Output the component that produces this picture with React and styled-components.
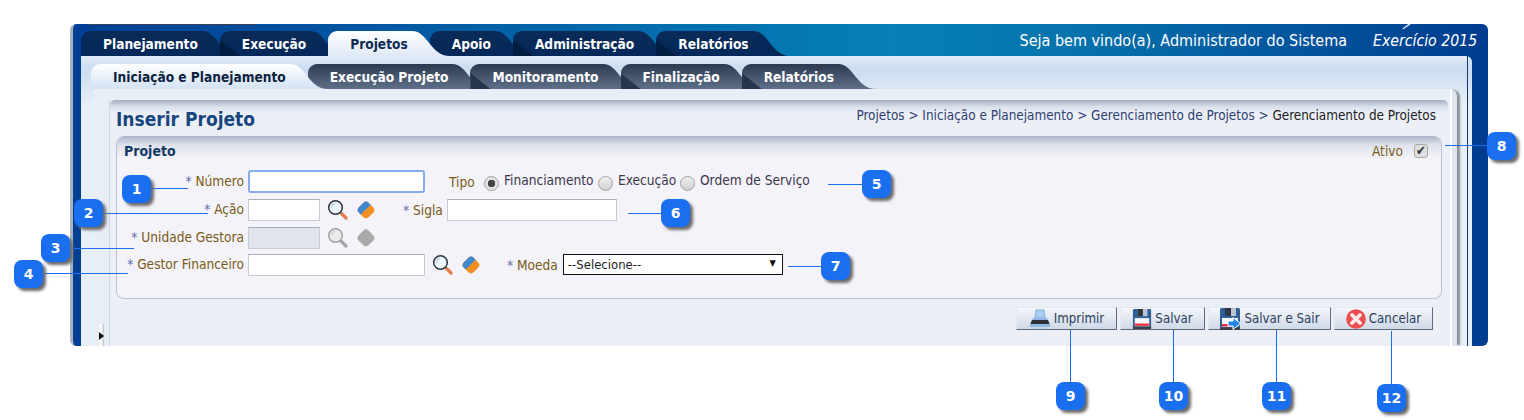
import { useId } from "react"
import styled, { createGlobalStyle } from "styled-components"

const font = `"DejaVu Sans Condensed", "DejaVu Sans", sans-serif`

const mainTabs = [
    { label: "Planejamento" },
    { label: "Execução" },
    { label: "Projetos", active: true },
    { label: "Apoio" },
    { label: "Administração" },
    { label: "Relatórios" },
]
const subTabs = [
    { label: "Iniciação e Planejamento", active: true },
    { label: "Execução Projeto" },
    { label: "Monitoramento" },
    { label: "Finalização" },
    { label: "Relatórios" },
]

const callouts = [
    { n: 1, x: 136, y: 189, line: { x: 150, y: 188, w: 38 } },
    { n: 2, x: 88, y: 213, line: { x: 103, y: 213, w: 105 } },
    { n: 3, x: 55, y: 248, line: { x: 70, y: 248, w: 64 } },
    { n: 4, x: 28, y: 274, line: { x: 43, y: 273, w: 85 } },
    { n: 5, x: 876, y: 184, line: { x: 828, y: 184, w: 34 } },
    { n: 6, x: 675, y: 213, line: { x: 628, y: 213, w: 33 } },
    { n: 7, x: 835, y: 266, line: { x: 788, y: 266, w: 33 } },
    { n: 8, x: 1501, y: 146, line: { x: 1445, y: 145, w: 42 } },
    { n: 9, x: 1070, y: 396, line: { x: 1070, y: 330, h: 52 } },
    { n: 10, x: 1173, y: 396, line: { x: 1173, y: 330, h: 52 } },
    { n: 11, x: 1276, y: 396, line: { x: 1276, y: 330, h: 52 } },
    { n: 12, x: 1391, y: 398, line: { x: 1391, y: 331, h: 53 } },
]

const tones = {
    main: ["#0a2b58", "#03285a"],
    mainActive: ["#ffffff", "#dfe9f6"],
    sub: ["#2c3a50", "#5e7089"],
    subActive: ["#ffffff", "#d3e2f3"],
}

const TabTail = ({ stops }) => {
    const id = useId()
    return (
        <TailSvg viewBox="0 0 42 25" width="42" height="25">
            <defs>
                <linearGradient id={id} x1="0" y1="0" x2="0" y2="1">
                    <stop offset="0" stopColor={stops[0]} />
                    <stop offset="1" stopColor={stops[1]} />
                </linearGradient>
            </defs>
            <path d="M0 0H4C20 0 22 25 42 25H0Z" fill={`url(#${id})`} />
        </TailSvg>
    )
}

const SearchIcon = ({ off }) => (
    <IconSvg viewBox="0 0 21 21" width="21" height="21">
        <path d="M12.5 12.5L15 15" stroke={off ? "#9a9a9a" : "#4a525c"} strokeWidth="2.4" />
        <path d="M15 15L19 19" stroke={off ? "#a5a5a5" : "#ea7b45"} strokeWidth="3.2" strokeLinecap="round" />
        <circle cx="8.5" cy="8.5" r="6.8" fill={off ? "#ececec" : "#eef7fb"} stroke={off ? "#a0a0a0" : "#2b333c"} strokeWidth="1.5" />
        <path d="M4.5 8.5C4.5 6 6 4.5 8.5 4.5" fill="none" stroke={off ? "#d0d0d0" : "#b9d6e6"} strokeWidth="1.4" />
    </IconSvg>
)

const EraserIcon = ({ off }) => (
    <IconSvg viewBox="0 0 20 20" width="20" height="20">
        <g transform="rotate(45 10 10)">
            <rect x="3" y="3" width="14" height="14" rx="4" fill={off ? "#a9a9a9" : "#f28f20"} />
            <path d="M7 3H9.5V17H7A4 4 0 0 1 3 13V7A4 4 0 0 1 7 3Z" fill={off ? "#a9a9a9" : "#3f88cc"} />
        </g>
    </IconSvg>
)

const PrinterIcon = () => (
    <IconSvg viewBox="0 0 22 20" width="22" height="20">
        <path d="M7 1H15L16 9H6Z" fill="#a9cdee" stroke="#7fb0de" />
        <path d="M1 15L4 9H18L21 15V18H1Z" fill="#8db9e4" />
        <path d="M3 11H19L20.5 15H1.5Z" fill="#2a2f38" />
        <path d="M5 18H17V20H5Z" fill="#b9d6f0" />
    </IconSvg>
)

const FloppyIcon = ({ arrow }) => (
    <IconSvg viewBox="0 0 22 22" width={arrow ? 22 : 20} height="22">
        <rect x="1" y="0" width="20" height="22" rx="1.5" fill="#2f5f96" />
        <rect x="6" y="0" width="11" height="8" fill="#b9c4d2" />
        <rect x="6" y="0" width="6" height="8" fill="#2c3644" />
        <rect x="3" y="10" width="16" height="9" fill="#f6f7fa" />
        <rect x="3" y="16" width="16" height="2.5" fill="#ea2b35" />
        <rect x="1" y="19.5" width="20" height="2.5" fill="#3b4048" />
        {arrow && <path d="M9 13H14V9.5L21.5 15.5L14 21.5V18H9Z" fill="#1f86e6" stroke="#fff" strokeWidth="1" />}
    </IconSvg>
)

const CancelIcon = () => (
    <IconSvg viewBox="0 0 20 20" width="20" height="20">
        <circle cx="10" cy="10" r="9.8" fill="#ee4d50" />
        <path d="M6 6L14 14M14 6L6 14" stroke="#fbeaea" strokeWidth="3.8" strokeLinecap="round" />
    </IconSvg>
)

const FieldLabel = ({ required = true, children }) => (
    <LabelText>
        {required && <Star>* </Star>}
        {children}
    </LabelText>
)

const TabStrip = ({ tabs, Face, dark, light }) => (
    <TabRow>
        {tabs.map((t, i) => (
            <TabItem key={t.label} $z={t.active ? 20 : i + 1}>
                <Face $active={t.active} $afterTail={i > 0 && !t.active && !tabs[i - 1].active}>
                    {t.label}
                </Face>
                <TabTail stops={t.active ? light : dark} />
            </TabItem>
        ))}
    </TabRow>
)

const App = () => {
    return (
        <Page>
            <GlobalStyle />
            <Frame>
                <TopBar>
                    <TabStrip tabs={mainTabs} Face={MainFace} dark={tones.main} light={tones.mainActive} />
                    <Welcome>Seja bem vindo(a), Administrador do Sistema</Welcome>
                    <Exercise>Exercício 2015</Exercise>
                </TopBar>

                <Body>
                    <BodyInner>
                        <SubTabBar>
                            <TabStrip tabs={subTabs} Face={SubFace} dark={tones.sub} light={tones.subActive} />
                        </SubTabBar>

                        <Workspace>
                            <Rail>
                                <Handle />
                            </Rail>
                            <Content>
                                <TitleRow>
                                    <Title>Inserir Projeto</Title>
                                    <Breadcrumb>
                                        Projetos &gt; Iniciação e Planejamento &gt; Gerenciamento de Projetos &gt; <b>Gerenciamento de Projetos</b>
                                    </Breadcrumb>
                                </TitleRow>

                                <Panel>
                                    <PanelHead>
                                        <PanelTitle>Projeto</PanelTitle>
                                        <AtivoLabel>Ativo</AtivoLabel>
                                        <CheckBox>✔</CheckBox>
                                    </PanelHead>

                                    <Form>
                                        <Row>
                                            <LabelCell><FieldLabel>Número</FieldLabel></LabelCell>
                                            <Input $w={177} $h={23} $focus />
                                            <TipoLabel>Tipo</TipoLabel>
                                            <Radio $on />
                                            <RadioText $w={94}>Financiamento</RadioText>
                                            <Radio />
                                            <RadioText $w={62}>Execução</RadioText>
                                            <Radio />
                                            <RadioText>Ordem de Serviço</RadioText>
                                        </Row>
                                        <Row>
                                            <LabelCell><FieldLabel>Ação</FieldLabel></LabelCell>
                                            <Input $w={72} $h={22} />
                                            <IconPair><SearchIcon /><EraserIcon /></IconPair>
                                            <SiglaLabel><FieldLabel>Sigla</FieldLabel></SiglaLabel>
                                            <Input $w={170} $h={22} />
                                        </Row>
                                        <Row>
                                            <LabelCell><FieldLabel>Unidade Gestora</FieldLabel></LabelCell>
                                            <Input $w={72} $h={22} $off />
                                            <IconPair><SearchIcon off /><EraserIcon off /></IconPair>
                                        </Row>
                                        <Row $tight>
                                            <LabelCell><FieldLabel>Gestor Financeiro</FieldLabel></LabelCell>
                                            <Input $w={177} $h={22} />
                                            <IconPair><SearchIcon /><EraserIcon /></IconPair>
                                            <MoedaLabel><FieldLabel>Moeda</FieldLabel></MoedaLabel>
                                            <SelectBox>
                                                --Selecione--
                                                <Caret>▼</Caret>
                                            </SelectBox>
                                        </Row>
                                    </Form>
                                </Panel>

                                <Actions>
                                    <Button $w={101}><PrinterIcon />Imprimir</Button>
                                    <Button $w={85}><FloppyIcon />Salvar</Button>
                                    <Button $w={123}><FloppyIcon arrow />Salvar e Sair</Button>
                                    <Button $w={99}><CancelIcon />Cancelar</Button>
                                </Actions>
                            </Content>
                        </Workspace>
                    </BodyInner>
                </Body>
            </Frame>

            {callouts.map(c => (
                <div key={c.n}>
                    <Leader $x={c.line.x} $y={c.line.y} $w={c.line.w} $h={c.line.h} />
                    <Badge $x={c.x} $y={c.y}>{c.n}</Badge>
                </div>
            ))}
        </Page>
    )
}

// ///// Style //////
const GlobalStyle = createGlobalStyle`
    html, body {
        margin: 0;
        padding: 0;
        background: #fff;
    }
    * {
        box-sizing: border-box;
    }
`
const Page = styled.div`
    position: relative;
    width: 1524px;
    height: 420px;
    padding: 24px 0 0 70px;
    overflow: hidden;
    background: #fff;
    font-family: ${font};
`
const Frame = styled.div`
    position: relative;
    width: 1418px;
    height: 322px;
    display: flex;
    flex-direction: column;
    padding: 0 16px 0 11px;
    border-left: 3px solid #a9b2bd;
    border-radius: 6px;
    overflow: hidden;
    background: linear-gradient(90deg, #003f96 0%, #0680b6 58%, #0674ad 70%, #003c8f 100%);

    &::before {
        content: "";
        position: absolute;
        left: 15px;
        top: 0;
        width: 168px;
        height: 1px;
        background: #3a4450;
    }
    &::after {
        content: "";
        position: absolute;
        left: 1329px;
        top: 0;
        width: 9px;
        height: 5px;
        clip-path: polygon(100% 0, 70% 0, 0 100%, 20% 100%);
        background: #dfe9f6;
    }
`
// Top bar
const TopBar = styled.div`
    flex: none;
    height: 32px;
    display: flex;
    align-items: flex-end;
    margin-left: -3px;
`
const TabRow = styled.div`
    flex: 1;
    display: flex;
    height: 25px;
`
const TabItem = styled.div`
    position: relative;
    z-index: ${p => p.$z};
    display: flex;
    height: 25px;
`
const TailSvg = styled.svg`
    flex: none;
    display: block;
    margin-right: -20px;
`
const MainFace = styled.div`
    position: relative;
    display: flex;
    align-items: center;
    height: 25px;
    padding-left: 22px;
    border-radius: 9px 0 0 0;
    font-size: 13.6px;
    font-weight: 700;
    color: ${p => (p.$active ? "#0d2a52" : "#fff")};
    background: linear-gradient(${p => (p.$active ? "#ffffff, #dfe9f6" : "#0a2b58, #03285a")});

    &::before {
        content: "";
        display: ${p => (p.$afterTail ? "block" : "none")};
        position: absolute;
        left: 0;
        bottom: 0;
        width: 20px;
        height: 16px;
        clip-path: polygon(0 0, 100% 100%, 0 100%);
        background: #021d42;
    }
`
const SubFace = styled(MainFace)`
    color: ${p => (p.$active ? "#0c1f3e" : "#fff")};
    background: linear-gradient(${p => (p.$active ? "#ffffff, #d3e2f3" : "#2c3a50, #5e7089")});

    &::before {
        background: #26354b;
    }
`
const Welcome = styled.div`
    height: 32px;
    line-height: 34px;
    font-size: 16px;
    color: #fff;
    white-space: nowrap;
`
const Exercise = styled.div`
    height: 32px;
    line-height: 34px;
    margin: 0 -6px 0 26px;
    width: 105px;
    font-size: 15.7px;
    font-style: italic;
    color: #fff;
    white-space: nowrap;
`
// Body
const Body = styled.div`
    flex: 1;
    min-height: 0;
    margin-left: -3px;
    padding-right: 4px;
    border-radius: 0 6px 0 0;
    background: linear-gradient(#e2ebf7 0, #cbddf2 12px, #dbe7f4 34px, #e8eff7 50px);
`
const BodyInner = styled.div`
    height: 100%;
    display: flex;
    flex-direction: column;
    padding: 8px 10px 0 10px;
    border-right: 1px solid #123a75;
`
const SubTabBar = styled.div`
    flex: none;
    height: 25px;
`
const Workspace = styled.div`
    flex: 1;
    min-height: 0;
    display: flex;
    margin-left: 2px;
    padding-top: 11px;
    border-radius: 0 8px 0 0;
    box-shadow: 4px 0 2px -1px #8a8e94;
    background: linear-gradient(90deg, #e8eef5 calc(100% - 7px), #fff calc(100% - 7px), #fff calc(100% - 5px), #dde5ef calc(100% - 5px));
`
const Rail = styled.div`
    position: relative;
    flex: none;
    width: 17px;
    border-right: 1px solid #cfd8e2;
`
const Handle = styled.div`
    position: absolute;
    left: 4px;
    bottom: 0;
    width: 7px;
    height: 22px;
    background: linear-gradient(90deg, #dfe8f3, #fff 60%, #b9c3ce);

    &::after {
        content: "";
        position: absolute;
        left: 2px;
        top: 8px;
        border-left: 5px solid #111;
        border-top: 4px solid transparent;
        border-bottom: 4px solid transparent;
    }
`
const Content = styled.div`
    flex: 1;
    min-width: 0;
    margin-right: 9px;
    padding: 0 6px;
    border-radius: 5px 5px 0 0;
    background: #ecf0f6 linear-gradient(#a3aec4 0, #dbe2ec 7px, #ecf0f6 14px) no-repeat;
`
const TitleRow = styled.div`
    height: 36px;
    display: flex;
    align-items: flex-end;
    justify-content: space-between;
    padding: 0 6px 5px 0;
`
const Title = styled.div`
    font-size: 19px;
    font-weight: 700;
    line-height: 24px;
    color: #17467f;
`
const Breadcrumb = styled.div`
    font-size: 13.4px;
    line-height: 20px;
    padding-bottom: 5px;
    color: #2c3d73;

    b {
        font-weight: 400;
        color: #1b1b24;
    }
`
// Panel
const Panel = styled.div`
    height: 163px;
    border: 1px solid #b9c3d6;
    border-top: 0;
    border-radius: 8px;
    background: #f3f3f9;
`
const PanelHead = styled.div`
    height: 29px;
    display: flex;
    align-items: center;
    padding: 0 13px 0 7px;
    border-radius: 8px 8px 0 0;
    background: linear-gradient(#acb5c8 0, #dfe2ec 9px, #f3f3f9 22px);
`
const PanelTitle = styled.div`
    flex: 1;
    font-size: 14px;
    font-weight: 700;
    color: #123a62;
`
const AtivoLabel = styled.div`
    font-size: 13.6px;
    color: #7a5a14;
    margin-right: 11px;
`
const CheckBox = styled.div`
    width: 14px;
    height: 14px;
    display: flex;
    align-items: center;
    justify-content: center;
    border: 1px solid #a8a8a8;
    border-radius: 3px;
    background: #dedede;
    font-size: 13px;
    line-height: 1;
    color: #333;
`
const Form = styled.div`
    display: flex;
    flex-direction: column;
    gap: 5px;
    padding-top: 5px;
`
const Row = styled.div`
    display: flex;
    align-items: center;
    min-height: 23px;
    margin-top: ${p => (p.$tight ? "-1px" : "0")};
`
const LabelCell = styled.div`
    flex: none;
    width: 127px;
    margin: 0 4px 2px 0;
    text-align: right;
    white-space: nowrap;
`
const LabelText = styled.span`
    font-size: 13.6px;
    color: #7a5a14;
`
const Star = styled.span`
    color: #5f6aa8;
`
const Input = styled.div`
    flex: none;
    width: ${p => p.$w}px;
    height: ${p => p.$h}px;
    background: ${p => (p.$off ? "#e1e4ea" : "#fff")};
    border: ${p => (p.$focus ? "2px solid #86abee" : "1px solid #c6cad4")};
    border-top-color: ${p => (p.$focus ? "#86abee" : "#a9aebb")};
    border-radius: ${p => (p.$focus ? "3px" : "0")};
`
const IconSvg = styled.svg`
    flex: none;
    display: block;
`
const IconPair = styled.div`
    display: flex;
    align-items: center;
    gap: 8px;
    margin-left: 7px;
`
const TipoLabel = styled.div`
    width: 27px;
    font-size: 13.6px;
    color: #7a5a14;
    margin: 0 8px 0 24px;
`
const Radio = styled.span`
    flex: none;
    width: 15px;
    height: 15px;
    margin-top: 3px;
    border: 1px solid #a2a2a2;
    border-radius: 50%;
    background: ${p => (p.$on
        ? "radial-gradient(circle, #444 0 3.5px, #e4e4e4 4px)"
        : "linear-gradient(#f1f1f1, #cfcfcf)")};
`
const RadioText = styled.span`
    width: ${p => (p.$w ? `${p.$w}px` : "auto")};
    margin-left: 5px;
    margin-top: -3px;
    font-size: 13.6px;
    color: #3d3650;
    white-space: nowrap;
`
const SiglaLabel = styled.div`
    margin: 0 4px 0 27px;
`
const MoedaLabel = styled.div`
    margin: 0 5px 0 26px;
`
const SelectBox = styled.div`
    position: relative;
    flex: none;
    width: 220px;
    height: 21px;
    padding-left: 4px;
    border: 1px solid #111;
    background: #fff;
    font-size: 13px;
    line-height: 19px;
    color: #222;
`
const Caret = styled.span`
    position: absolute;
    right: 6px;
    top: 0;
    font-size: 9px;
    line-height: 17px;
    color: #111;
`
const Actions = styled.div`
    display: flex;
    justify-content: flex-end;
    gap: 3px;
    margin-top: 8px;
    padding-right: 9px;
`
const Button = styled.div`
    flex: none;
    width: ${p => p.$w}px;
    height: 23px;
    display: flex;
    align-items: center;
    justify-content: center;
    gap: 3px;
    border: 1px solid #e2e6ee;
    border-right-color: #5e6a80;
    border-bottom-color: #5e6a80;
    background: linear-gradient(#f4f6fa, #cfd9e8);
    font-size: 13.2px;
    color: #2b3f5e;
    white-space: nowrap;
`
// Callouts
const Badge = styled.div`
    position: absolute;
    left: ${p => p.$x - 14}px;
    top: ${p => p.$y - 14}px;
    width: 29px;
    height: 28px;
    display: flex;
    align-items: center;
    justify-content: center;
    border-radius: 8px;
    background: #1a6ff0;
    box-shadow: 3px 3px 3px #6b6b6b;
    font-family: "DejaVu Sans", sans-serif;
    font-size: 14px;
    font-weight: 700;
    color: #fff;
`
const Leader = styled.div`
    position: absolute;
    left: ${p => p.$x}px;
    top: ${p => p.$y}px;
    width: ${p => p.$w || 1}px;
    height: ${p => p.$h || 1}px;
    background: #1a6ff0;
`

export default App
